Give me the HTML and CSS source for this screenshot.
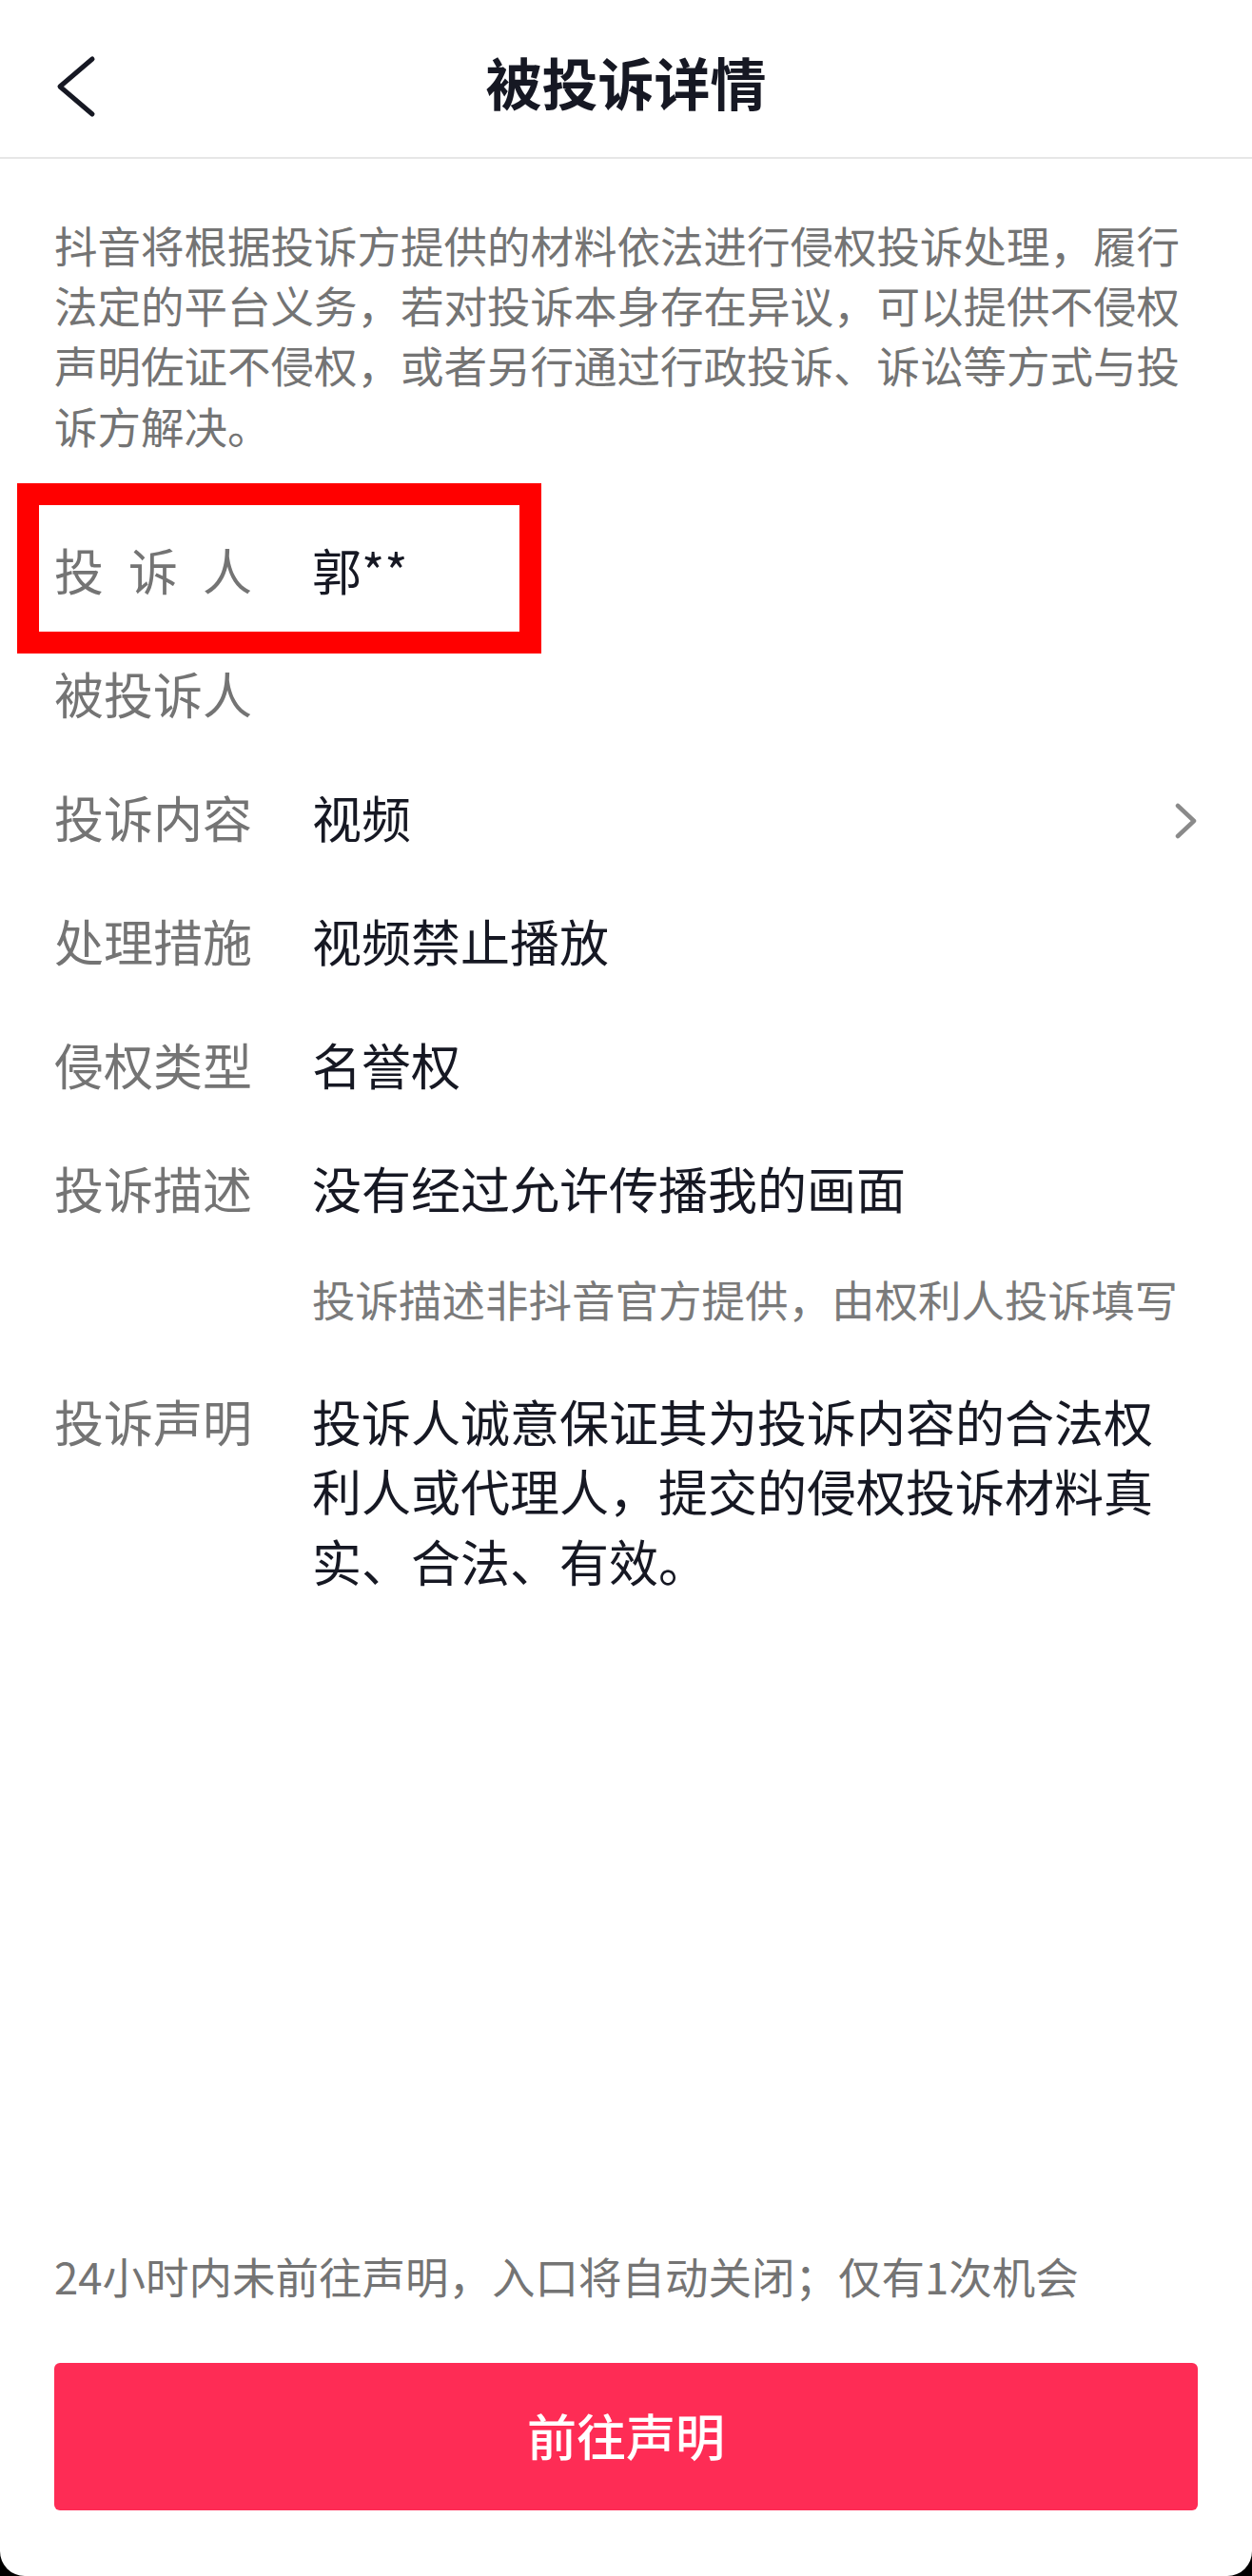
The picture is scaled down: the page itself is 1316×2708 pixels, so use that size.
FILE: index.html
```html
<!DOCTYPE html>
<html lang="zh-CN">
<head>
<meta charset="utf-8">
<title>被投诉详情</title>
<link rel="stylesheet" href="styles.css">
</head>
<body>
<div class="screen">
  <header class="header">
    <svg class="back" width="48" height="80" viewBox="0 0 48 80" aria-hidden="true">
      <path d="M41 16 L7 45 L41 74" fill="none" stroke="#161823" stroke-width="5" stroke-linecap="round" stroke-linejoin="round"/>
    </svg>
    <h1 class="title">被投诉详情</h1>
    <div class="header-spacer"></div>
  </header>

  <main class="content">
    <p class="intro">抖音将根据投诉方提供的材料依法进行侵权投诉处理，履行法定的平台义务，若对投诉本身存在异议，可以提供不侵权声明佐证不侵权，或者另行通过行政投诉、诉讼等方式与投诉方解决。</p>

    <div class="details">
      <div class="row">
        <div class="label spread"><span>投</span><span>诉</span><span>人</span></div>
        <div class="value">郭**</div>
      </div>
      <div class="row">
        <div class="label">被投诉人</div>
        <div class="value"></div>
      </div>
      <div class="row">
        <div class="label">投诉内容</div>
        <div class="value">视频</div>
        <svg class="chevron" width="24" height="48" viewBox="0 0 24 48" aria-hidden="true">
          <path d="M3 12 L20 28 L3 44" fill="none" stroke="#8a8a8a" stroke-width="4.5" stroke-linecap="round" stroke-linejoin="round"/>
        </svg>
      </div>
      <div class="row">
        <div class="label">处理措施</div>
        <div class="value">视频禁止播放</div>
      </div>
      <div class="row">
        <div class="label">侵权类型</div>
        <div class="value">名誉权</div>
      </div>
      <div class="row">
        <div class="label">投诉描述</div>
        <div class="value">
          <div>没有经过允许传播我的画面</div>
          <div class="value-note">投诉描述非抖音官方提供，由权利人投诉填写</div>
        </div>
      </div>
      <div class="row">
        <div class="label">投诉声明</div>
        <div class="value">投诉人诚意保证其为投诉内容的合法权利人或代理人，提交的侵权投诉材料真实、合法、有效。</div>
      </div>
    </div>
  </main>

  <footer class="footer">
    <p class="deadline">24小时内未前往声明，入口将自动关闭；仅有1次机会</p>
    <button class="btn" type="button">前往声明</button>
  </footer>

  <div class="highlight" aria-hidden="true"></div>
</div>
</body>
</html>
```

FILE: styles.css
```css
* {
  box-sizing: border-box;
}

html, body {
  margin: 0;
  padding: 0;
}

body {
  background: #000;
  font-family: "Noto Sans CJK SC", "Noto Sans", sans-serif;
}

.screen {
  position: relative;
  width: 1316px;
  height: 2708px;
  background: #fff;
  border-radius: 0 0 26px 26px;
  overflow: hidden;
  display: flex;
  flex-direction: column;
}

/* Header */
.header {
  height: 167px;
  padding-top: 7px;
  border-bottom: 2px solid #e6e6e6;
  display: grid;
  grid-template-columns: 1fr auto 1fr;
  align-items: center;
  flex: none;
}

.back {
  margin-left: 56px;
  justify-self: start;
  overflow: visible;
}

.title {
  margin: 0;
  font-size: 59px;
  line-height: 72px;
  font-weight: 700;
  color: #161823;
}

/* Content */
.content {
  flex: 1;
  padding: 0 57px;
}

.intro {
  margin: 59px 0 0;
  font-size: 45.5px;
  line-height: 63.2px;
  color: #747474;
}

.details {
  margin-top: 83px;
}

.row {
  display: flex;
  font-size: 52px;
  line-height: 73.5px;
  margin-bottom: 56.5px;
}

.label {
  flex: none;
  width: 208px;
  margin-right: 63px;
  color: #747474;
}

.label.spread {
  display: flex;
  justify-content: space-between;
}

.value {
  flex: 1;
  min-width: 0;
  color: #161823;
}

.value-note {
  margin-top: 48.5px;
  margin-bottom: 3.5px;
  font-size: 45.5px;
  line-height: 63px;
  color: #7a7a7a;
}

.chevron {
  flex: none;
  align-self: center;
}

/* Footer */
.footer {
  flex: none;
  padding: 0 57px 69px;
}

.deadline {
  margin: 0 0 60px;
  font-size: 45.5px;
  line-height: 63px;
  color: #747474;
}

.btn {
  display: flex;
  align-items: center;
  justify-content: center;
  width: 100%;
  height: 155px;
  padding: 0 0 4px;
  border: none;
  border-radius: 6px;
  background: #fe2c55;
  color: #fff;
  font-family: inherit;
  font-size: 52px;
  font-weight: 500;
  line-height: 1;
}

/* Annotation overlay */
.highlight {
  position: absolute;
  left: 18px;
  top: 508px;
  width: 551px;
  height: 179px;
  border: 23px solid #ff0000;
  pointer-events: none;
}
```
